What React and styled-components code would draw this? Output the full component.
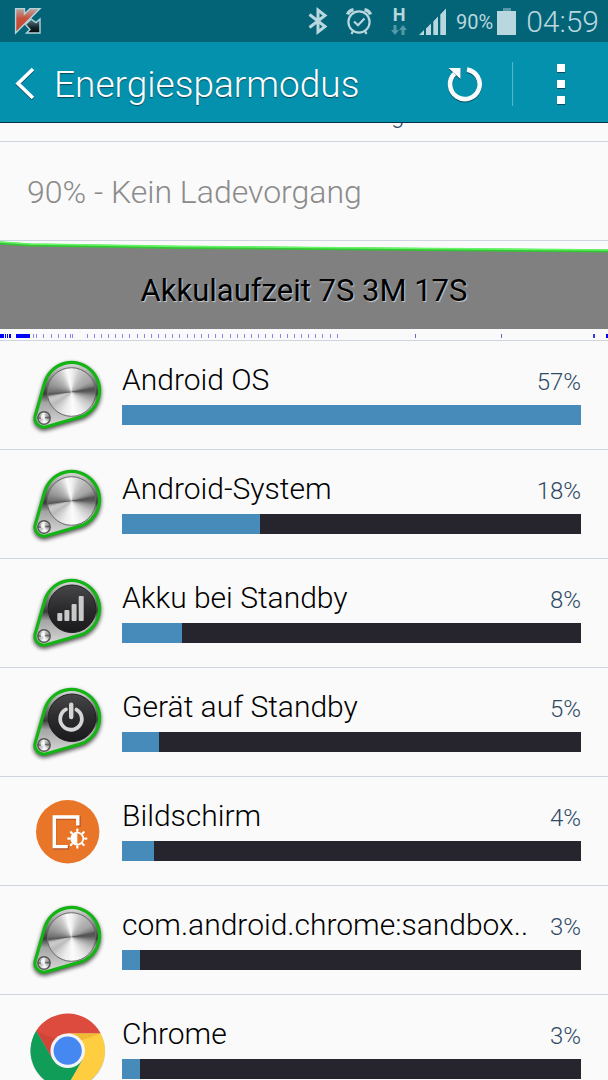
import React from 'react'
import styled, { createGlobalStyle } from 'styled-components'


const consumers = [
    { name: 'Android OS', percent: 57, bar: 100, icon: 'metal' },
    { name: 'Android-System', percent: 18, bar: 30, icon: 'metal' },
    { name: 'Akku bei Standby', percent: 8, bar: 13, icon: 'signal' },
    { name: 'Gerät auf Standby', percent: 5, bar: 8, icon: 'power' },
    { name: 'Bildschirm', percent: 4, bar: 7, icon: 'display' },
    { name: 'com.android.chrome:sandboxed_process', percent: 3, bar: 4, icon: 'metal' },
    { name: 'Chrome', percent: 3, bar: 4, icon: 'chrome' },
]

// [x, width] of the periods in which the device was awake
const awake = [[0, 4], [5, 1], [7, 1], [9, 2], [16, 14]]
const faint = [33, 36, 43, 51, 58, 65, 70, 72]
for (let i = 0; i < 36; i++) faint.push(Math.round(86.5 + i * 7.15))

// brushed metal, [angle, grey]
const metalStops = [
    [0, 95], [12, 150], [30, 195], [60, 235], [85, 252], [110, 235], [130, 210], [145, 185],
    [160, 205], [167, 190], [174, 90], [184, 120], [200, 150], [220, 175], [240, 205],
    [258, 250], [272, 240], [290, 205], [310, 180], [330, 165], [343, 130], [351, 80], [361, 95],
]

function grey(angle) {
    const i = metalStops.findIndex((s) => s[0] > angle)
    const [a0, g0] = metalStops[i - 1]
    const [a1, g1] = metalStops[i]
    const g = Math.round(g0 + ((g1 - g0) * (angle - a0)) / (a1 - a0))
    return `rgb(${g},${g},${g})`
}

function Metal({ cx, cy, r }) {
    const wedges = []
    for (let a = 0; a < 360; a += 4) {
        const p = (deg) => `${cx + r * Math.cos((deg * Math.PI) / 180)} ${cy + r * Math.sin((deg * Math.PI) / 180)}`
        // each wedge reaches well under the next one, so that no seam shows
        wedges.push(<path key={a} d={`M${cx} ${cy}L${p(a)}L${p(a + (a < 350 ? 10 : 4))}Z`} fill={grey(a + 2)} />)
    }
    return <g>{wedges}</g>
}

const DROP = 'M5.3 59.6L14.6 26.9A28 28 0 1 1 49.1 61.4L16.4 70.7A9 9 0 0 1 5.3 59.6Z'

function KnobIcon({ type }) {
    const id = `knob-${type}`
    return (
        <svg width="80" height="80" viewBox="0 0 80 80" aria-hidden="true">
            <defs>
                <linearGradient id={`${id}-plate`} x1="0" y1="0" x2="0" y2="1">
                    <stop offset="0" stopColor="#e0e0e0" />
                    <stop offset=".25" stopColor="#8a8a8a" />
                    <stop offset=".48" stopColor="#3a3a3a" />
                    <stop offset=".62" stopColor="#a4a4a4" />
                    <stop offset="1" stopColor="#dcdcdc" />
                </linearGradient>
                <linearGradient id={`${id}-dark`} x1="0" y1="0" x2="0" y2="1">
                    <stop offset="0" stopColor="#47474a" />
                    <stop offset=".5" stopColor="#2b2b2d" />
                    <stop offset="1" stopColor="#1a1a1c" />
                </linearGradient>
                <filter id={`${id}-shadow`} x="-20%" y="-20%" width="150%" height="150%">
                    <feGaussianBlur stdDeviation="2" />
                </filter>
            </defs>
            <path d={DROP} fill="#000" stroke="#000" strokeWidth="3" opacity=".7" transform="translate(0 2)" filter={`url(#${id}-shadow)`} />
            <path d={DROP} fill={`url(#${id}-plate)`} stroke="#14b414" strokeWidth="3.2" />
            {type === 'metal' ? (
                <g>
                    <Metal cx={41.5} cy={36} r={24.3} />
                    <circle cx="41.5" cy="36" r="24.3" fill="none" stroke="#666" strokeWidth="1" />
                </g>
            ) : (
                <circle cx="42" cy="34.8" r="23.8" fill={`url(#${id}-dark)`} stroke="#222" strokeWidth="1" />
            )}
            {type === 'signal' && (
                <g fill="#c9c9c9">
                    <rect x="27.3" y="39" width="5" height="8" rx="1" />
                    <rect x="34.4" y="36" width="5" height="11" rx="1" />
                    <rect x="41.6" y="30" width="5" height="17" rx="1" />
                    <rect x="48.7" y="22" width="5" height="25" rx="1" />
                </g>
            )}
            {type === 'power' && (
                <g fill="none" stroke="#d6d6d6">
                    <path d="M36 26.4A10.8 10.8 0 1 0 46.4 26.6" strokeWidth="3.8" strokeLinecap="round" />
                    <path d="M41.2 21.6V34" strokeWidth="4.4" strokeLinecap="round" />
                </g>
            )}
            <Metal cx={14} cy={62} r={6.2} />
            <circle cx="14" cy="62" r="6.2" fill="none" stroke="#555" strokeWidth="1.4" />
            <circle cx="12.8" cy="61" r="2.2" fill="#fff" opacity=".8" />
        </svg>
    )
}

function DisplayIcon() {
    const rays = [0, 45, 90, 135, 180, 225, 270, 315]
    return (
        <svg width="80" height="80" viewBox="0 0 80 80" aria-hidden="true">
            <circle cx="37.7" cy="39.7" r="31.7" fill="#e97628" />
            <g fill="none" strokeWidth="3.4">
                <path d="M49 34.7V26H24.6V55.8H39" stroke="#b4502a" />
                <path d="M47.8 33.6V25H24.3V54.6H37.8" stroke="#fff" />
            </g>
            <g stroke="#fff" strokeWidth="2.2" strokeLinecap="round">
                {rays.map((a) => (
                    <path key={a} d="M47.3 39V37.5" transform={`rotate(${a} 47.3 46.6)`} />
                ))}
            </g>
            <circle cx="47.3" cy="46.6" r="6" fill="#e97628" stroke="#fff" strokeWidth="1.8" />
            <path d="M47.3 40.2A6.4 6.4 0 0 0 47.3 53Z" fill="#fff" />
        </svg>
    )
}

function ChromeIcon() {
    return (
        <svg width="80" height="80" viewBox="0 0 80 80" aria-hidden="true">
            <circle cx="37.7" cy="41.4" r="37.4" fill="#999" opacity=".5" />
            <path d="M6.2 20.8A37.3 37.3 0 0 1 70.7 23.4H37.7L22.7 49.3Z" fill="#dd4b3e" />
            <path d="M70.7 23.4A37.3 37.3 0 0 1 36.2 77.9L52.7 49.3L37.7 23.4Z" fill="#ffcd40" />
            <path d="M36.2 77.9A37.3 37.3 0 0 1 6.2 20.8L22.7 49.3H52.7Z" fill="#0f9d58" />
            <path d="M6.2 20.8L22.7 49.3L27 30Z" fill="#b93a2f" opacity=".35" />
            <path d="M70.7 23.4H40L51 30.5Z" fill="#d9a020" opacity=".4" />
            <circle cx="37.7" cy="40.7" r="17.3" fill="#f4f4f4" />
            <circle cx="37.7" cy="40.7" r="14.1" fill="#4688f1" />
        </svg>
    )
}

function AppIcon({ type }) {
    if (type === 'display') return <DisplayIcon />
    if (type === 'chrome') return <ChromeIcon />
    return <KnobIcon type={type} />
}

function StatusIcons() {
    return (
        <StatusGroup>
            <svg width="20" height="30" viewBox="0 0 20 30" fill="none" stroke="#b9d7df" strokeWidth="3">
                <path d="M1.5 8.5L17 20.5L10 26V4L17 9.5L1.5 21.5" />
            </svg>
            <Alarm width="28" height="30" viewBox="0 0 28 30" fill="none" stroke="#b9d7df" strokeWidth="2.2">
                <circle cx="14" cy="16" r="10.6" />
                <path d="M9 15.5L13 19.3L19.5 12.5M8 25L6.5 28M20 25L21.5 28" />
                <path d="M2.5 8.5Q4 4.5 8.5 3.6M25.5 8.5Q24 4.5 19.5 3.6" strokeWidth="3.4" />
            </Alarm>
            <Network>
                <b>H</b>
                <svg width="16" height="12" viewBox="0 0 16 12" fill="#5598a8">
                    <path d="M2.5 1H5.5V6H8L4 11L0 6H2.5ZM10.5 11H13.5V6H16L12 1L8 6H10.5Z" />
                </svg>
            </Network>
            <svg width="28" height="30" viewBox="0 0 28 30" fill="#b9d7df">
                <path d="M0 29L5 24V29ZM7 22.5L12 17.5V29H7ZM14.3 15.5L19 10.5V29H14.3ZM21.3 8.5L27 2.5V29H21.3Z" />
            </svg>
            <Level>90%</Level>
            <svg width="20" height="30" viewBox="0 0 20 30" fill="#b9d7df">
                <path d="M0 5H19V29H0Z" />
                <path d="M6 2H14V5H6Z" fill="#5598a8" />
            </svg>
            <Clock>04:59</Clock>
        </StatusGroup>
    )
}

function App() {
    return (
        <Screen>
            <GlobalStyle />
            <StatusBar>
                <svg width="28" height="28" viewBox="0 0 28 28">
                    <defs>
                        <linearGradient id="k-red" x1="0" y1="0" x2="0" y2="1">
                            <stop offset="0" stopColor="#b9a6a4" />
                            <stop offset=".4" stopColor="#c8523c" />
                            <stop offset="1" stopColor="#c4432c" />
                        </linearGradient>
                        <linearGradient id="k-dark" x1="0" y1="0" x2="0" y2="1">
                            <stop offset="0" stopColor="#5d8790" />
                            <stop offset=".6" stopColor="#15262b" />
                            <stop offset="1" stopColor="#05090a" />
                        </linearGradient>
                    </defs>
                    <path d="M1.6 1.6H10.5V7L16 1.6H26L1.6 26Z" fill="url(#k-red)" stroke="#b5d3da" strokeWidth="1.4" />
                    <path d="M26 12V26H12.5L16 22.5L11.5 17.5L17 12L22 15.5Z" fill="url(#k-dark)" stroke="#b5d3da" strokeWidth="1.4" />
                </svg>
                <StatusIcons />
            </StatusBar>
            <ActionBar>
                <BackButton type="button" aria-label="Zurück">
                    <svg width="20" height="34" viewBox="0 0 20 34" fill="none" strokeWidth="3.6">
                        <path d="M18 3L3 17.5L18 32" stroke="#0b4a5c" />
                        <path d="M18 2L3 16.5L18 31" stroke="#fff" />
                    </svg>
                </BackButton>
                <h1>Energiesparmodus</h1>
                <RefreshButton type="button" aria-label="Aktualisieren">
                    <svg width="38" height="38" viewBox="0 0 38 38" fill="none">
                        <g stroke="#0b4a5c" fill="#0b4a5c" transform="translate(0 1)">
                            <path d="M22 4.6A14.8 14.8 0 1 1 9.6 8.6" fill="none" strokeWidth="4.6" />
                            <path d="M3.5 3H15.5V14Z" stroke="none" />
                        </g>
                        <path d="M22 4.6A14.8 14.8 0 1 1 9.6 8.6" stroke="#f7fbfc" strokeWidth="4.6" />
                        <path d="M3.5 3H15.5V14Z" fill="#f7fbfc" />
                    </svg>
                </RefreshButton>
                <Divider />
                <MoreButton type="button" aria-label="Weitere Optionen">
                    <i />
                    <i />
                    <i />
                </MoreButton>
            </ActionBar>
            <Content>
                <ScrolledRow><span>g</span></ScrolledRow>
                <ChargeState>90% - Kein Ladevorgang</ChargeState>
                <Chart>
                    <svg width="100%" height="12" viewBox="0 0 608 12" preserveAspectRatio="none">
                        <path d="M0 2L30 4.5L180 7L400 8.5L608 11V12H0Z" fill="#808080" />
                        <path d="M0 2L30 4L180 6.4L400 8.2L608 10" fill="none" stroke="#35c435" strokeWidth="3" />
                        <path d="M0 1L30 3L180 5.4L400 7.2L608 9" fill="none" stroke="#66f566" strokeWidth="1.6" />
                    </svg>
                    <Runtime>Akkulaufzeit 7S 3M 17S</Runtime>
                    <svg width="100%" height="11" viewBox="0 0 608 11" preserveAspectRatio="none">
                        {awake.map(([x, w]) => <rect key={x} x={x} y="5" width={w} height="4" fill="#0000ff" />)}
                        {faint.map((x) => <rect key={x} x={x} y="5" width="1" height="4" fill="#8a84f4" />)}
                        <rect x="415" y="5" width="1" height="4" fill="#6a64d8" />
                        <rect x="501" y="5" width="1" height="4" fill="#6a64d8" />
                        <rect x="593" y="5" width="2" height="4" fill="#3c38dd" />
                        <rect x="606" y="5" width="2" height="4" fill="#0000ee" />
                    </svg>
                </Chart>
                <List>
                    {consumers.map((c) => (
                        <Item key={c.name}>
                            <AppIcon type={c.icon} />
                            <Details>
                                <Labels>
                                    <Name>{c.name.length > 20 ? `${c.name.slice(0, 26)}..` : c.name}</Name>
                                    <Percent>{c.percent}%</Percent>
                                </Labels>
                                <Track>
                                    <Fill style={{ width: `${c.bar}%` }} />
                                </Track>
                            </Details>
                        </Item>
                    ))}
                </List>
            </Content>
        </Screen>
    )
}

export default App

const GlobalStyle = createGlobalStyle`
*{
    box-sizing: border-box;
}
body{
    margin: 0;
    background: #fafafa;
    font-family: Roboto, sans-serif;
    font-weight: 300;
}
svg{
    display: block;
    flex-shrink: 0;
}
button{
    display: flex;
    align-items: center;
    justify-content: center;
    padding: 0;
    border: 0;
    background: none;
    cursor: pointer;
}
`
const Screen = styled.div`
display: flex;
flex-direction: column;
height: 100vh;
overflow: hidden;
`
const StatusBar = styled.div`
display: flex;
align-items: center;
justify-content: space-between;
flex-shrink: 0;
height: 42px;
padding: 0 9px 0 14px;
background: #036478;
color: #b9d7df;
`
const StatusGroup = styled.div`
display: flex;
align-items: center;
`
const Alarm = styled.svg`
margin: 0 18px 0 17px;
`
const Network = styled.div`
display: flex;
flex-direction: column;
align-items: center;
width: 16px;
margin-right: 12px;
b{
    font-size: 18px;
    line-height: 18px;
    font-weight: 700;
}
`
const Level = styled.span`
margin: 0 4px 0 9px;
padding-top: 2px;
font-size: 20px;
font-weight: 400;
`
const Clock = styled.span`
margin-left: 9px;
font-size: 30px;
`
const ActionBar = styled.header`
display: flex;
align-items: center;
flex-shrink: 0;
height: 81px;
padding-top: 3px;
border-bottom: 1px solid #03304c;
background: #0391ae;
color: #fff;
h1{
    flex: 1;
    margin: 0;
    padding-top: 2px;
    font-size: 37px;
    line-height: 44px;
    font-weight: 300;
    text-shadow: 0 1px 1px #0b4a5c;
}
`
const BackButton = styled.button`
width: 54px;
height: 76px;
&&{
    padding-right: 4px;
}
`
const RefreshButton = styled.button`
width: 96px;
height: 76px;
`
const Divider = styled.div`
width: 1px;
height: 44px;
background: #58b5c9;
`
const MoreButton = styled.button`
&&{
    flex-direction: column;
    gap: 8px;
}
width: 95px;
height: 76px;
i{
    width: 8px;
    height: 8px;
    background: #fff;
    box-shadow: 0 1px 0 #0b4a5c;
}
`
const Content = styled.main`
flex: 1;
min-height: 0;
overflow: hidden;
`
const ScrolledRow = styled.div`
display: flex;
flex-direction: column;
justify-content: flex-end;
height: 19px;
padding: 0 0 12px 391px;
overflow: hidden;
border-bottom: 1px solid #ced5df;
color: #2f4a66;
font-size: 24px;
line-height: 28px;
`
const ChargeState = styled.div`
height: 99px;
padding: 0 27px;
border-bottom: 1px solid #ced5df;
color: #8b8b8b;
font-size: 32px;
line-height: 100px;
`
const Chart = styled.section`
border-bottom: 1px solid #ced5df;
`
const Runtime = styled.div`
height: 76px;
background: #808080;
color: #000;
font-size: 31px;
line-height: 76px;
font-weight: 400;
text-align: center;
text-shadow: 1px 1px 1px #ccc;
`
const List = styled.ul`
margin: 0;
padding: 0;
list-style: none;
`
const Item = styled.li`
display: flex;
align-items: flex-start;
gap: 12px;
height: 109px;
padding: 15px 27px 0 30px;
border-bottom: 1px solid #ced5df;
`
const Details = styled.div`
flex: 1;
min-width: 0;
`
const Labels = styled.div`
display: flex;
align-items: baseline;
justify-content: space-between;
height: 49px;
padding-top: 6px;
`
const Name = styled.span`
color: #000;
font-size: 30px;
line-height: 36px;
white-space: nowrap;
`
const Percent = styled.span`
color: #2f4a66;
font-size: 24px;
`
const Track = styled.div`
height: 20px;
background: #26242c;
`
const Fill = styled.div`
height: 100%;
background: #468bba;
`
